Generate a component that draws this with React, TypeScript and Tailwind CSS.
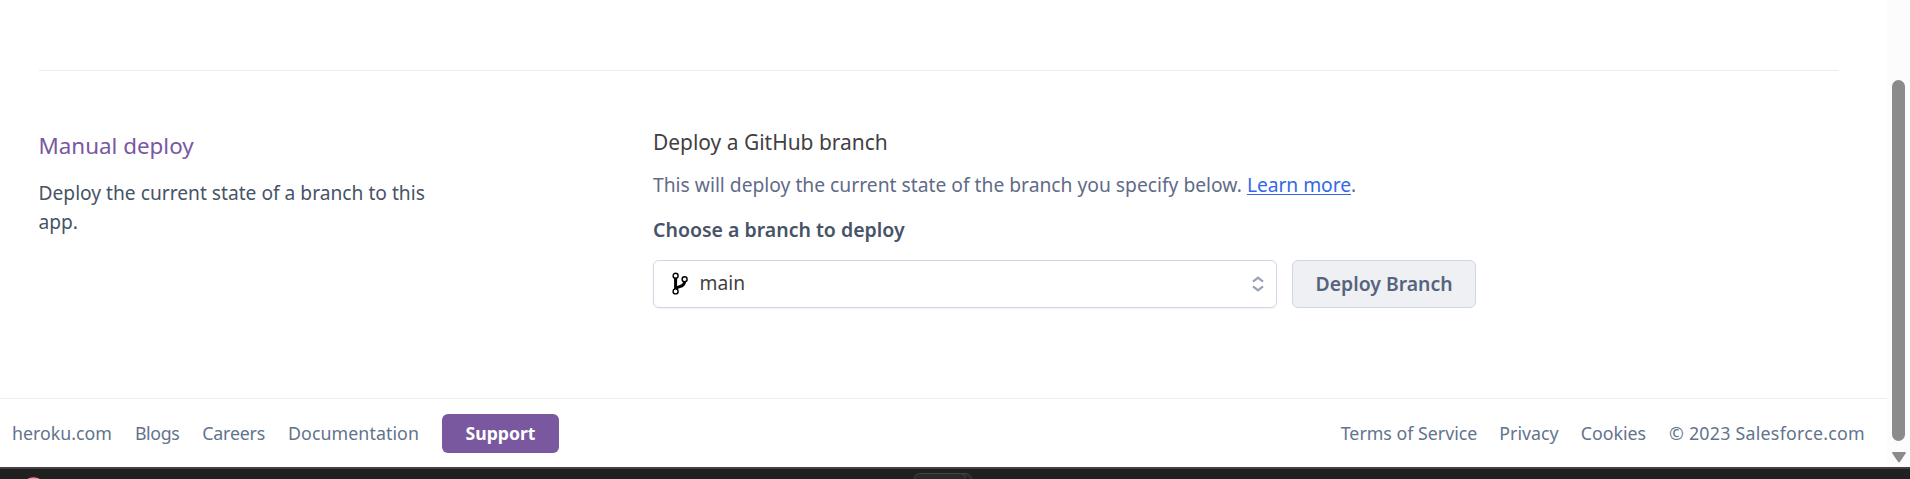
function BranchIcon() {
  return (
    <svg width="18" height="24" viewBox="0 0 18 24" fill="none" stroke="#000" className="shrink-0">
      <path d="M4.6 6V18M4.6 16.6C8 13.6 13 15.6 13.6 9.5" strokeWidth="3" />
      <g fill="#fff" strokeWidth="1.4">
        <circle cx="4.6" cy="3.8" r="2.5" />
        <circle cx="13.6" cy="7.3" r="2.5" />
        <circle cx="4.6" cy="19.4" r="2.5" />
      </g>
    </svg>
  );
}

function SortIcon() {
  return (
    <svg width="14" height="18" viewBox="0 0 14 18" fill="none" stroke="#96a3b6" strokeWidth="2.2">
      <path d="M2 6.7 7 2.6l5 4.1M2 11.3l5 4.1 5-4.1" />
    </svg>
  );
}

export default function App() {
  return (
    <div className="flex h-[479px] w-[1910px] flex-col overflow-hidden bg-white font-['Noto_Sans',sans-serif]">
      <div className="flex h-[467px]">
        <div className="flex w-[1887px] flex-col">
          <main className="flex h-[398px] flex-col pr-12 pl-[39px]">
            <div className="mt-[70px] h-px w-[1800px] bg-[#ebebf2]" />
            <section className="flex">
              <div className="w-[614px] pt-[60px]">
                <h2 className="-ml-[0.5px] text-[22.4px] leading-[30px] text-[#79589f]">Manual deploy</h2>
                <p className="mt-[17px] -ml-[0.5px] w-[400px] text-[19.2px] leading-[29px] text-[#475366]">
                  Deploy the current state of a branch to this app.
                </p>
              </div>
              <div className="flex flex-col pt-[57px]">
                <h3 className="text-[20.95px] leading-7 text-[#3f3f44]">Deploy a GitHub branch</h3>
                <p className="mt-[15px] text-[19.25px] leading-7 whitespace-nowrap text-[#5f6b87]">
                  This will deploy the current state of the branch you specify below.{" "}
                  <a className="tracking-[-0.05px] text-[#3468e6] underline decoration-1 underline-offset-2">Learn more</a>.
                </p>
                <label className="mt-[17px] text-[19.5px] leading-7 font-semibold text-[#475366]">
                  Choose a branch to deploy
                </label>
                <div className="mt-4 flex gap-[15px]">
                  <div className="flex h-12 w-[624px] items-center rounded-md border border-[#cfd7e6] pr-[11px] pl-[17px] shadow-xs">
                    <BranchIcon />
                    <span className="-mt-0.5 ml-[10.5px] flex-1 text-[19.2px] text-[#3f3f44]">main</span>
                    <SortIcon />
                  </div>
                  <button className="h-12 w-[184px] rounded-md border border-[#cfd7e6] bg-[#eff0f4] text-[19.4px] font-semibold text-[#56647e]">
                    Deploy Branch
                  </button>
                </div>
              </div>
            </section>
          </main>
          <footer className="flex h-[69px] items-center justify-between border-t border-[#eeeef1] pr-[22px] pl-3 text-[17.8px] text-[#62738d]">
            <nav className="flex items-center gap-[23px]">
              <a>heroku.com</a>
              <a className="tracking-[-0.4px]">Blogs</a>
              <a className="tracking-[-0.2px]">Careers</a>
              <a className="tracking-[0.07px]">Documentation</a>
              <button className="h-[39px] w-[117px] rounded-md bg-[#79589f] text-[17.6px] font-bold text-white">Support</button>
            </nav>
            <nav className="flex items-center gap-[22px]">
              <a>Terms of Service</a>
              <a>Privacy</a>
              <a className="mr-px">Cookies</a>
              <span className="tracking-[0.25px]">© 2023 Salesforce.com</span>
            </nav>
          </footer>
        </div>
        <div className="flex w-[23px] flex-col items-center bg-[#fcfcfc] pt-20">
          <div className="h-[361px] w-[13px] rounded-full bg-[#8b8b8b]" />
          <svg width="14" height="11" viewBox="0 0 14 11" className="mt-[11px]" fill="#8b8b8b">
            <path d="M1.2 0h11.6q1.6 0 .8 1.4L8 9.8q-1 1.2-2 0L.4 1.4Q-.4 0 1.2 0Z" />
          </svg>
        </div>
      </div>
      <div className="flex h-3 border-t-2 border-[#414141] bg-[#202020]">
        <svg width="1910" height="10" viewBox="0 0 1910 10">
          <ellipse cx="33.5" cy="14" rx="9" ry="5.8" fill="#f08ca0" />
          <path d="M958 4.5h7q5 0 7 6" fill="#2b2b2d" stroke="#454547" />
          <rect x="914.5" y="4.5" width="51" height="14" rx="5" fill="#29292b" stroke="#454547" />
        </svg>
      </div>
    </div>
  );
}
